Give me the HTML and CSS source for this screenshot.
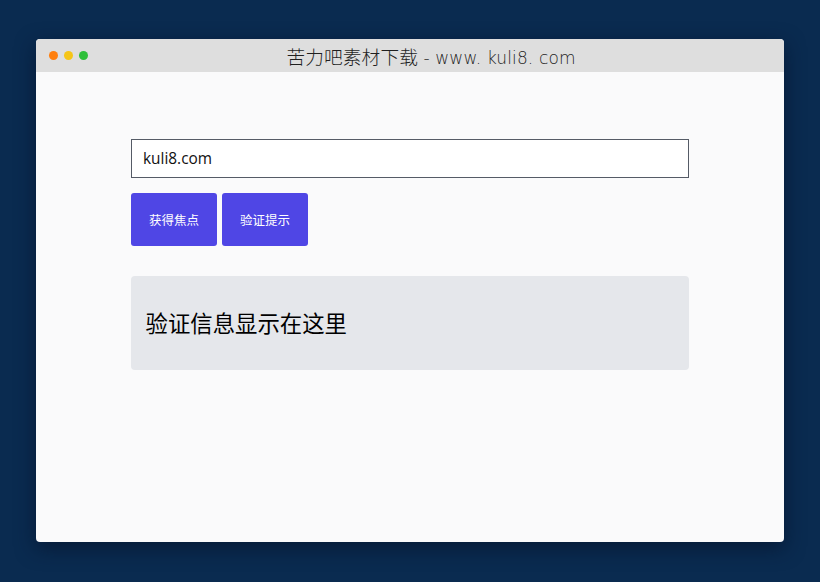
FILE: index.html
```html
<!DOCTYPE html>
<html lang="zh-CN">
<head>
<meta charset="utf-8">
<title>验证提示</title>
<link rel="stylesheet" href="styles.css">
</head>
<body>
<div class="window">
  <header class="titlebar">
    <div class="dots">
      <span class="dot dot-orange"></span>
      <span class="dot dot-yellow"></span>
      <span class="dot dot-green"></span>
    </div>
    <div class="title"><span class="title-cjk">苦力吧素材下载</span> - www. kuli8. com</div>
  </header>
  <main class="content">
    <input class="field" type="text" value="kuli8.com">
    <div class="actions">
      <button class="btn" type="button">获得焦点</button>
      <button class="btn" type="button">验证提示</button>
    </div>
    <div class="message">验证信息显示在这里</div>
  </main>
</div>
</body>
</html>
```
FILE: styles.css
```css
* { box-sizing: border-box; }
html, body { height: 100%; }
body {
  margin: 0;
  background: #0a2b50;
  padding: 39px 36px 40px;
  font-family: "Noto Sans", "Noto Sans CJK SC", sans-serif;
  overflow: hidden;
}
.window {
  height: 503px;
  background: #fafafb;
  border-radius: 4px;
  overflow: hidden;
  box-shadow: 0 6px 20px rgba(5, 20, 45, 0.75);
}
.titlebar {
  position: relative;
  height: 33px;
  padding-left: 42px;
  background: #dedede;
  display: flex;
  align-items: center;
  justify-content: center;
}
.dots {
  position: absolute;
  left: 13px;
  top: 12px;
  display: flex;
  gap: 6px;
}
.dot { width: 9px; height: 9px; border-radius: 50%; }
.dot-orange { background: #ff7f0e; }
.dot-yellow { background: #f5c518; }
.dot-green { background: #2fbf3a; }
.title {
  font-family: "DejaVu Sans", "Noto Sans CJK SC", sans-serif;
  font-size: 17px;
  font-weight: 200;
  letter-spacing: 0.12px;
  color: #1f1f1f;
  white-space: nowrap;
}
.title-cjk {
  font-size: 18.7px;
}
.content {
  padding: 67px 95px 0;
  display: flex;
  flex-direction: column;
}
.field {
  width: 558px;
  height: 39px;
  padding: 0 11px 1px;
  border: 1px solid #555b66;
  border-radius: 0;
  background: #fff;
  color: #111;
  font-family: "Open Sans", "Noto Sans CJK SC", sans-serif;
  font-size: 15.4px;
  outline: none;
}
.actions {
  display: flex;
  gap: 5px;
  margin-top: 15px;
}
.btn {
  width: 86px;
  height: 53px;
  padding: 0;
  border: 0;
  border-radius: 3px;
  background: #4f46e5;
  color: #fff;
  font-family: "Noto Sans CJK SC", sans-serif;
  font-size: 12.5px;
}
.message {
  width: 558px;
  height: 94px;
  margin-top: 30px;
  padding: 0 14.5px 2px;
  display: flex;
  align-items: center;
  border-radius: 4px;
  background: #e5e7eb;
  color: #000;
  font-family: "Noto Sans CJK SC", sans-serif;
  font-size: 22.4px;
}
```
